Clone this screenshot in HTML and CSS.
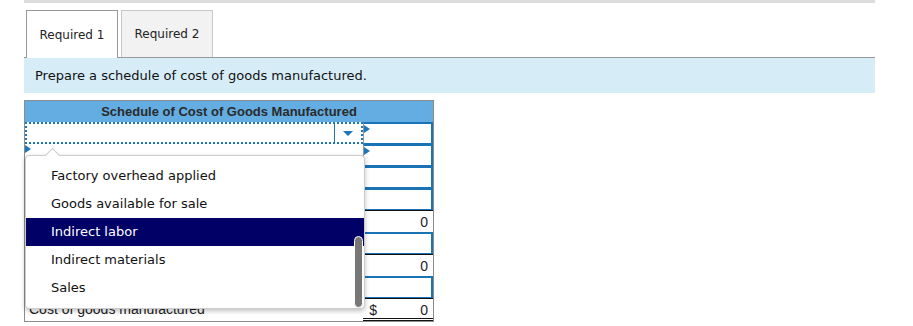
FILE: index.html
```html
<!DOCTYPE html>
<html lang="en">
<head>
    <meta charset="UTF-8">
    <title>Schedule of Cost of Goods Manufactured</title>
    <link rel="stylesheet" href="styles.css">
</head>
<body>
    <div class="wrap">
        <div class="topbar"></div>
        <div class="tabs">
            <div class="tab active">Required 1</div>
            <div class="tab">Required 2</div>
        </div>
        <div class="instruction">Prepare a schedule of cost of goods manufactured.</div>

        <div class="schedule">
            <div class="schedule-head">Schedule of Cost of Goods Manufactured</div>

            <div class="row">
                <div class="cell-label select-cell">
                    <span class="select-arrow"></span>
                </div>
                <div class="cell-amount input marker"></div>
            </div>
            <div class="row">
                <div class="cell-label marker"></div>
                <div class="cell-amount input marker"></div>
            </div>
            <div class="row">
                <div class="cell-label"></div>
                <div class="cell-amount input"></div>
            </div>
            <div class="row">
                <div class="cell-label"></div>
                <div class="cell-amount input"></div>
            </div>
            <div class="row">
                <div class="cell-label"></div>
                <div class="cell-amount total">0</div>
            </div>
            <div class="row">
                <div class="cell-label"></div>
                <div class="cell-amount input"></div>
            </div>
            <div class="row">
                <div class="cell-label"></div>
                <div class="cell-amount total">0</div>
            </div>
            <div class="row">
                <div class="cell-label"></div>
                <div class="cell-amount input"></div>
            </div>
            <div class="row last">
                <div class="cell-label text">Cost of goods manufactured</div>
                <div class="cell-amount total final"><span>$</span><span>0</span></div>
            </div>

            <!-- open dropdown list -->
            <div class="dropdown">
                <div class="option">Factory overhead applied</div>
                <div class="option">Goods available for sale</div>
                <div class="option selected">Indirect labor</div>
                <div class="option">Indirect materials</div>
                <div class="option">Sales</div>
                <div class="scroll-thumb"></div>
            </div>
        </div>
    </div>
</body>
</html>
```

FILE: styles.css
```css
* {
    margin: 0;
    padding: 0;
    box-sizing: border-box;
}

body {
    font-family: "DejaVu Sans", Verdana, sans-serif;
    background-color: #fff;
    color: #222;
}

.wrap {
    width: 851px;
    margin-left: 24px;
}

.topbar {
    height: 3px;
    background-color: #dcdcdc;
}

.tabs {
    display: flex;
    gap: 3px;
    margin-top: 7px;
    padding-left: 2px;
    border-bottom: 1px solid #999;
}

.tab {
    width: 92px;
    height: 47px;
    display: flex;
    align-items: center;
    justify-content: center;
    font-size: 12px;
    background-color: #f2f2f2;
    border: 1px solid #c8c8c8;
    border-bottom: none;
}

.tab.active {
    background-color: #fff;
    border-color: #999;
    height: 48px;
    margin-bottom: -1px;
}

.instruction {
    height: 35px;
    padding: 10px 11px 0;
    background-color: #d6edf8;
    font-size: 13px;
    color: #111;
}

.schedule {
    position: relative;
    width: 410px;
    margin-top: 7px;
    border: 1px solid #8c8c8c;
    font-family: "Liberation Sans", Arial, sans-serif;
}

.schedule-head {
    height: 21px;
    background-color: #63ade3;
    text-align: center;
    font-weight: bold;
    font-size: 13px;
    line-height: 21px;
    color: #2a2a2a;
}

.row {
    display: flex;
    height: 22px;
}

.cell-label {
    position: relative;
    width: 339px;
}

.cell-amount {
    position: relative;
    width: 70px;
    font-size: 14px;
    text-align: right;
    padding-right: 5px;
    line-height: 22px;
}

.select-cell {
    border: 2px dotted #1b76bb;
}

.select-arrow {
    position: absolute;
    right: 0;
    top: 0;
    width: 27px;
    height: 18px;
    border-left: 1px solid #1b76bb;
}

.select-arrow::after {
    content: "";
    position: absolute;
    left: 8px;
    top: 7px;
    border-left: 5px solid transparent;
    border-right: 5px solid transparent;
    border-top: 5px solid #1b76bb;
}

.input {
    border: 2px solid #1a73b5;
    border-left: 1px solid #9a9a9a;
    border-bottom-width: 1px;
    box-shadow: 0 1px 0 #888;
}

.marker::before {
    content: "";
    position: absolute;
    left: 0;
    top: 1px;
    border-top: 4px solid transparent;
    border-bottom: 4px solid transparent;
    border-left: 6px solid #1b76bb;
}

.total {
    border-top: 1px solid #111;
}

.final {
    display: flex;
    justify-content: space-between;
    padding-left: 6px;
    border-bottom: 3px double #111;
}

.row.last {
    height: 23px;
}

.text {
    font-size: 14px;
    color: #222;
    padding-left: 4px;
    line-height: 22px;
}

.dropdown {
    position: absolute;
    left: 0;
    top: 54px;
    width: 340px;
    padding: 6px 0 6px;
    background-color: #fff;
    border: 1px solid #ccc;
    border-radius: 4px;
    box-shadow: 0 2px 5px rgba(0, 0, 0, 0.25);
    font-family: "DejaVu Sans", Verdana, sans-serif;
}

.dropdown::before {
    content: "";
    position: absolute;
    left: 21px;
    top: -6px;
    width: 10px;
    height: 10px;
    background-color: #fff;
    border-left: 1px solid #ccc;
    border-top: 1px solid #ccc;
    transform: rotate(45deg);
}

.option {
    height: 28px;
    padding-left: 25px;
    font-size: 13px;
    line-height: 28px;
    color: #111;
}

.option.selected {
    background-color: #000066;
    color: #fff;
}

.scroll-thumb {
    position: absolute;
    right: 1px;
    top: 80px;
    width: 9px;
    height: 72px;
    background-color: #777;
    border: 1px solid #fff;
    border-radius: 5px;
}
```
